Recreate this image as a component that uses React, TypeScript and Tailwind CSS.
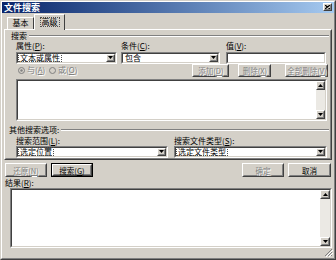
import React from 'react';

type BoxProps = { className?: string; children?: React.ReactNode };

const dis = "text-[#808080] [text-shadow:1px_1px_0_#ffffff]";

function Raised({ className = '', children, def = false }: BoxProps & { def?: boolean }) {
  return (
    <div className={`${def ? 'border border-black' : ''} ${className}`}>
      <div className="h-full w-full border border-t-white border-l-white border-r-[#404040] border-b-[#404040]">
        <div className="flex h-full w-full items-center justify-center border border-t-[#d4d0c8] border-l-[#d4d0c8] border-r-[#808080] border-b-[#808080] bg-[#d4d0c8] text-[7.5px] leading-[7px]">
          {children}
        </div>
      </div>
    </div>
  );
}

function Sunken({ className = '', children }: BoxProps) {
  return (
    <div className={`border border-t-[#808080] border-l-[#808080] border-r-white border-b-white ${className}`}>
      <div className="flex h-full w-full border border-t-[#404040] border-l-[#404040] border-r-[#d4d0c8] border-b-[#d4d0c8] bg-white">
        {children}
      </div>
    </div>
  );
}

function Arrow({ up = false }: { up?: boolean }) {
  return (
    <svg width="5" height="3" viewBox="0 0 5 3">
      <polygon points={up ? '2.5,0 5,3 0,3' : '0,0 5,0 2.5,3'} fill="#000" />
    </svg>
  );
}

function Combo({ className = '', text, focus = false }: { className?: string; text: string; focus?: boolean }) {
  return (
    <Sunken className={className}>
      <div className="flex flex-1 items-center pl-[1px]">
        <span className={`px-[1px] leading-[7px] ${focus ? 'outline outline-1 outline-dotted outline-[#505050]' : ''}`}>{text}</span>
      </div>
      <Raised className="h-full w-[9px]">
        <Arrow />
      </Raised>
    </Sunken>
  );
}

function ScrollBar({ className = '' }: { className?: string }) {
  return (
    <div className={`flex flex-col bg-[#ebe9e4] ${className}`}>
      <Raised className="h-[9px] w-full">
        <Arrow up />
      </Raised>
      <div className="flex-1" />
      <Raised className="h-[9px] w-full">
        <Arrow />
      </Raised>
    </div>
  );
}

function Radio({ checked = false }: { checked?: boolean }) {
  return (
    <svg width="7" height="7" viewBox="0 0 7 7" className="mr-[2px]">
      <circle cx="3.5" cy="3.5" r="3" fill="#d4d0c8" stroke="#808080" strokeWidth="1" />
      {checked && <circle cx="3.5" cy="3.5" r="1.2" fill="#808080" />}
    </svg>
  );
}

function Etched({ className = '' }: { className?: string }) {
  return <div className={`h-[2px] border-t border-t-[#808080] border-b border-b-white ${className}`} />;
}

export default function App() {
  return (
    <div className="h-[260px] w-[336px] whitespace-nowrap border border-t-[#d4d0c8] border-l-[#d4d0c8] border-r-[#404040] border-b-[#404040] bg-[#d4d0c8] font-['Noto_Sans_CJK_SC',sans-serif] text-[8px] leading-[8px] text-black">
      <div className="flex h-full flex-col border border-t-white border-l-white border-r-[#808080] border-b-[#808080]">
        {/* title bar */}
        <div className="flex h-[11px] items-center justify-between bg-gradient-to-r from-[#0a246a] to-[#a6caf0] pl-[2px] pr-[2px]">
          <span className="text-[9px] font-bold leading-[9px] text-white">文件搜索</span>
          <Raised className="h-[8px] w-[9px]">
            <svg width="5" height="4" viewBox="0 0 5 4">
              <path d="M0 0 L5 4 M5 0 L0 4" stroke="#000" strokeWidth="1.2" />
            </svg>
          </Raised>
        </div>

        {/* tabs */}
        <div className="mt-[1px] flex h-[15px] items-end pl-[5px]">
          <div className="flex h-[12px] w-[27px] items-center justify-center border border-b-0 border-t-white border-l-white border-r-[#404040]">
            基本
          </div>
          <div className="relative z-10 -mb-[1px] flex h-[16px] w-[31px] items-center justify-center border border-b-0 border-t-white border-l-white border-r-[#404040] bg-[#d4d0c8]">
            <span className="px-[1px] outline outline-1 outline-dotted outline-[#505050]">高级</span>
          </div>
        </div>

        {/* tab panel */}
        <div className="ml-[2px] h-[136px] w-[328px] border border-t-white border-l-white border-r-[#404040] border-b-[#404040]">
          <div className="flex h-full flex-col border border-t-transparent border-l-transparent border-r-[#808080] border-b-[#808080] pt-[1px]">
            <div className="flex h-[8px] items-center pl-[5px] pr-[1px]">
              <span>搜索</span>
              <Etched className="ml-[2px] flex-1" />
            </div>

            <div className="mt-[2px] flex h-[8px] items-center pl-[10px]">
              <span className="w-[105px]">属性(<u>P</u>):</span>
              <span className="w-[105px]">条件(<u>C</u>):</span>
              <span>值(<u>V</u>):</span>
            </div>

            <div className="mt-[2px] flex h-[12px] pl-[10px]">
              <Combo className="h-full w-[101px]" text="文本或属性" focus />
              <Combo className="ml-[4px] h-full w-[99px]" text="包含" />
              <Sunken className="ml-[6px] h-full w-[100px]" />
            </div>

            <div className="flex h-[13px] items-center pl-[12px]">
              <span className={`flex w-[31px] items-center ${dis}`}>
                <Radio checked />与(<u>A</u>)
              </span>
              <span className={`flex items-center ${dis}`}>
                <Radio />或(<u>O</u>)
              </span>
              <Raised className="ml-[115px] h-[13px] w-[37px]">
                <span className={dis}>添加(<u>D</u>)</span>
              </Raised>
              <Raised className="ml-[9px] h-[13px] w-[33px]">
                <span className={dis}>删除(<u>X</u>)</span>
              </Raised>
              <Raised className="ml-[14px] h-[13px] w-[43px]">
                <span className={dis}>全部删除(<u>V</u>)</span>
              </Raised>
            </div>

            <div className="mt-[2px] flex h-[42px] pl-[10px]">
              <Sunken className="h-full w-[311px]">
                <div className="flex-1" />
                <ScrollBar className="h-full w-[9px]" />
              </Sunken>
            </div>

            <div className="mt-[5px] flex h-[8px] items-center pl-[3px] pr-[1px]">
              <span>其他搜索选项:</span>
              <Etched className="ml-[2px] flex-1" />
            </div>

            <div className="mt-[3px] flex h-[8px] items-center pl-[10px]">
              <span className="w-[158px]">搜索范围(<u>L</u>):</span>
              <span>搜索文件类型(<u>S</u>):</span>
            </div>

            <div className="mt-[1px] flex h-[12px] pl-[10px]">
              <Combo className="h-full w-[152px]" text="选定位置" focus />
              <Combo className="ml-[6px] h-full w-[153px]" text="选定文件类型" focus />
            </div>
          </div>
        </div>

        {/* buttons */}
        <div className="mt-[3px] flex h-[14px] pl-[3px]">
          <Raised className="h-full w-[42px]">
            <span className={dis}>还原(<u>N</u>)</span>
          </Raised>
          <Raised className="ml-[4px] h-full w-[42px]" def>
            <span>搜索(<u>G</u>)</span>
          </Raised>
          <Raised className="ml-[149px] h-full w-[42px]">
            <span className={dis}>确定</span>
          </Raised>
          <Raised className="ml-[4px] h-full w-[43px]">
            <span>取消</span>
          </Raised>
        </div>

        <div className="mt-[2px] flex h-[8px] items-center pl-[3px]">
          <span>结果(<u>R</u>):</span>
        </div>

        <div className="mt-[1px] flex h-[62px] pl-[8px]">
          <Sunken className="h-full w-[322px]">
            <div className="flex-1" />
            <ScrollBar className="h-full w-[10px]" />
          </Sunken>
        </div>

        <div className="flex flex-1 items-end justify-end pr-[1px] pb-[1px]">
          <svg width="9" height="9" viewBox="0 0 9 9">
            <path d="M8 1 L1 8 M8 4 L4 8 M8 7 L7 8" stroke="#808080" strokeWidth="1" />
            <path d="M9 2 L2 9 M9 5 L5 9" stroke="#ffffff" strokeWidth="1" />
          </svg>
        </div>
      </div>
    </div>
  );
}
